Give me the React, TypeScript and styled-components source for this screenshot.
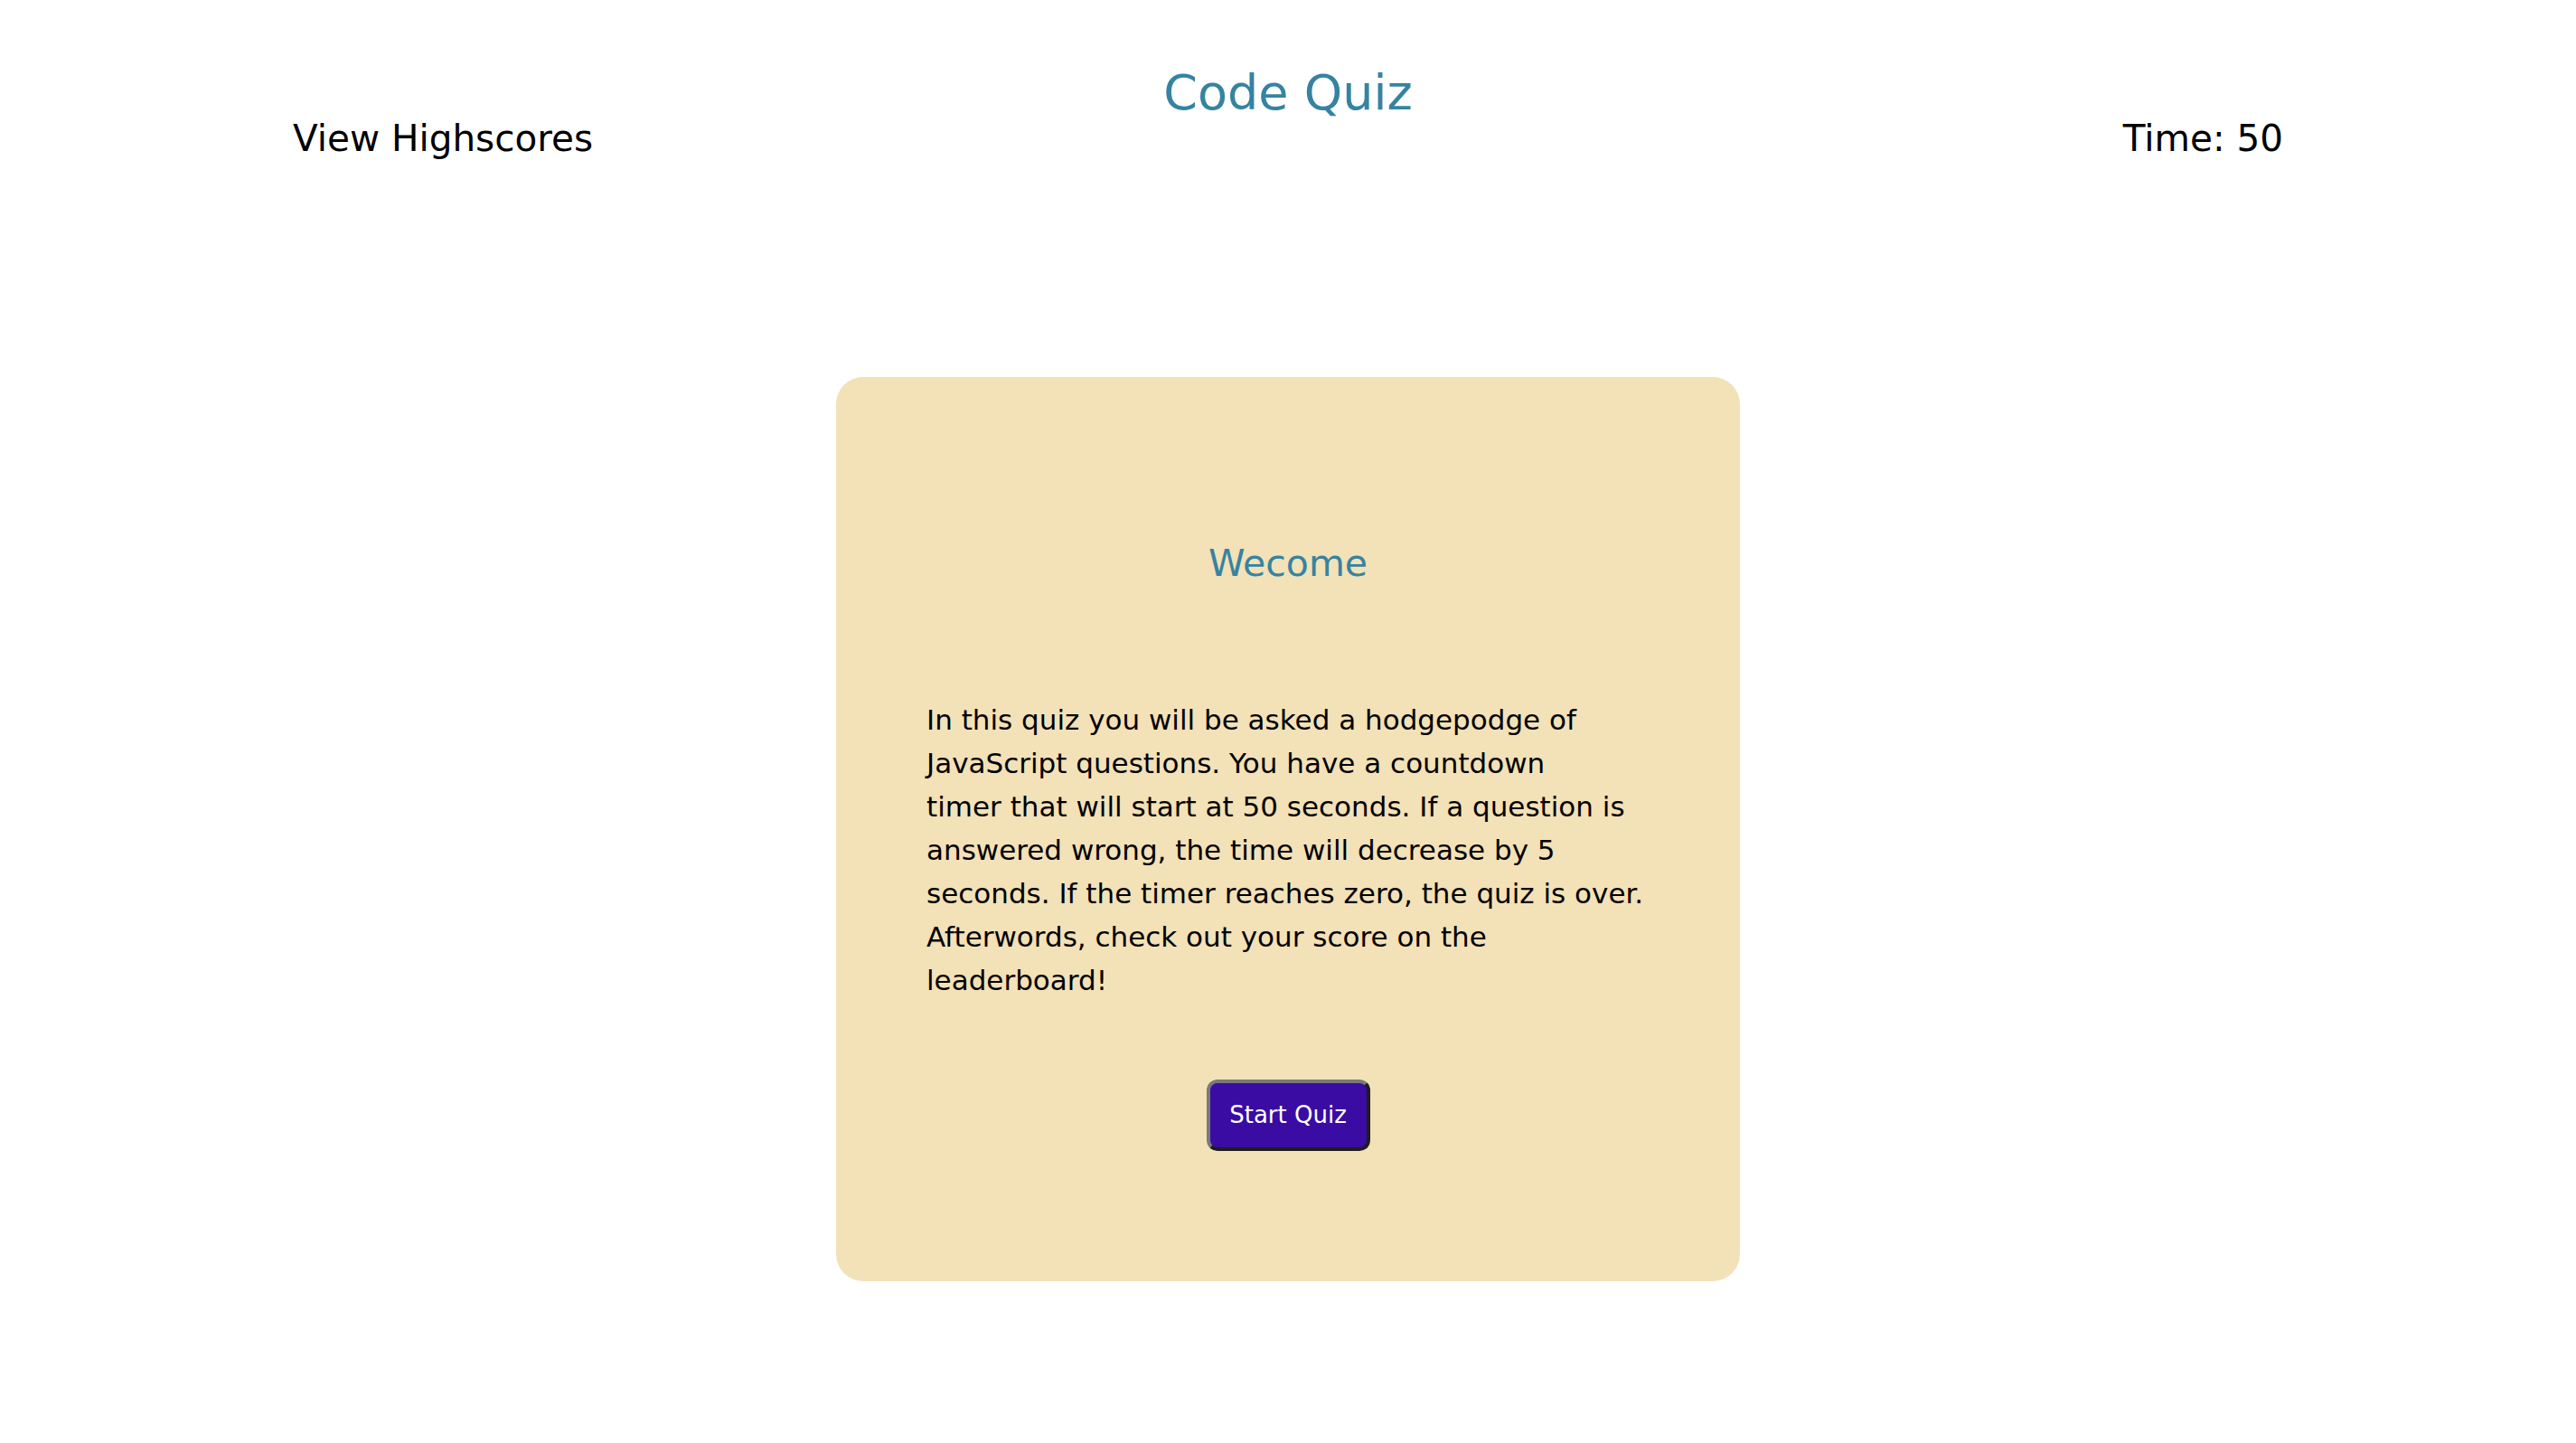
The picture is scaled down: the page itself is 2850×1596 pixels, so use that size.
import React from "react";
import styled, { createGlobalStyle } from "styled-components";

const GlobalStyle = createGlobalStyle`
    body {
        margin: 8px;
        background: #ffffff;
        font-family: "DejaVu Sans", "Open Sans", sans-serif;
        color: #000000;
    }
`;

const Header = styled.header`
    display: grid;
    grid-template-columns: 1fr auto 1fr;
    align-items: start;
    padding: 63px 316px 0;
`;

const SideItem = styled.div<{ $align: "left" | "right" }>`
    justify-self: ${(p) => (p.$align === "left" ? "start" : "end")};
    margin-top: 58px;
    font-size: 40.5px;
    line-height: 1.2;
`;

const Title = styled.h1`
    margin: 0;
    font-size: 54px;
    font-weight: 400;
    line-height: 1.2;
    color: #3683a1;
`;

const Main = styled.main`
    display: flex;
    justify-content: center;
    padding-top: 239px;
`;

const Card = styled.section`
    box-sizing: border-box;
    width: 1000px;
    height: 1000px;
    padding: 182px 100px 0;
    background: #f3e1b7;
    border-radius: 30px;
    display: flex;
    flex-direction: column;
    align-items: center;
`;

const Heading = styled.h2`
    margin: 0;
    font-size: 41px;
    font-weight: 400;
    line-height: 1.2;
    color: #3683a1;
`;

const Intro = styled.p`
    margin: 124px 0 0;
    width: 100%;
    font-size: 31px;
    line-height: 48px;
`;

const StartButton = styled.button`
    margin-top: 86px;
    box-sizing: border-box;
    width: 181px;
    height: 79px;
    border: 4px solid;
    border-color: #7a7a7a #1d1d1d #1d1d1d #7a7a7a;
    border-radius: 12px;
    background: #3a0ca3;
    color: #ffffff;
    font-family: "DejaVu Sans", "Open Sans", sans-serif;
    font-size: 26px;
    cursor: pointer;
`;

const introLines = [
    "In this quiz you will be asked a hodgepodge of",
    "JavaScript questions. You have a countdown",
    "timer that will start at 50 seconds. If a question is",
    "answered wrong, the time will decrease by 5",
    "seconds. If the timer reaches zero, the quiz is over.",
    "Afterwords, check out your score on the",
    "leaderboard!",
];

export default function App() {
    return (
        <>
            <GlobalStyle />
            <Header>
                <SideItem $align="left">View Highscores</SideItem>
                <Title>Code Quiz</Title>
                <SideItem $align="right">Time: 50</SideItem>
            </Header>
            <Main>
                <Card>
                    <Heading>Wecome</Heading>
                    <Intro>
                        {introLines.map((line, i) => (
                            <React.Fragment key={i}>
                                {line}
                                {i < introLines.length - 1 && <br />}
                            </React.Fragment>
                        ))}
                    </Intro>
                    <StartButton>Start Quiz</StartButton>
                </Card>
            </Main>
        </>
    );
}
